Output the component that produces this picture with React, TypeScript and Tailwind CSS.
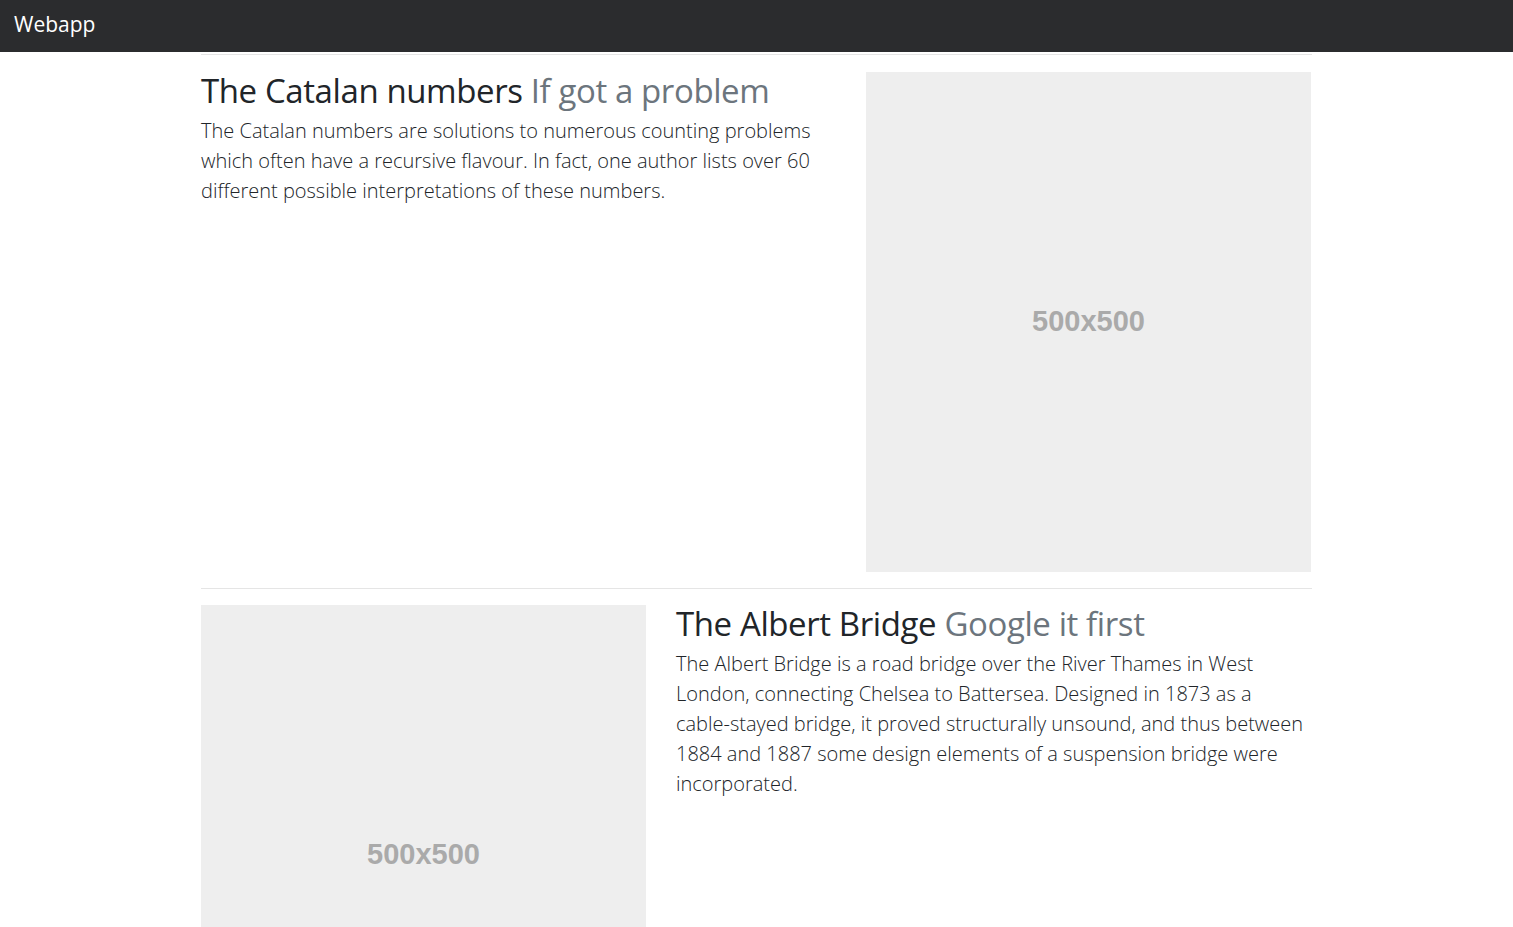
import React from "react";

const font = { fontFamily: '"Segoe UI", "Open Sans", "Noto Sans", sans-serif' };

function Placeholder() {
  return (
    <div className="flex h-[500px] w-full items-center justify-center bg-[#eeeeee]">
      <span
        className="text-[29px] font-bold text-[#aaaaaa]"
        style={{ fontFamily: '"Liberation Sans", Arial, sans-serif' }}
      >
        500x500
      </span>
    </div>
  );
}

export default function App() {
  return (
    <div className="h-screen overflow-hidden bg-white text-[#212529]" style={font}>
      <nav className="flex h-[52px] items-center bg-[#2b2c2e] px-[14px] pb-[2px]">
        <span className="text-[21px] text-white">Webapp</span>
      </nav>
      <main className="mx-auto max-w-[1141px] px-[15px]">
        <hr className="mt-[2px] mb-[17px] border-t border-[#e5e5e5]" />
        <div className="flex gap-[30px]">
          <div className="w-[635px] shrink-0">
            <h2 className="text-[33px] leading-[1.15] tracking-[-0.4px]">
              The Catalan numbers <span className="text-[#6c757d]">If got a problem</span>
            </h2>
            <p className="mt-[6px] text-[20px] font-light leading-[30px]">
              The Catalan numbers are solutions to numerous counting problems which often have a recursive flavour. In fact, one author lists over 60 different possible interpretations of these numbers.
            </p>
          </div>
          <div className="w-[445px] shrink-0">
            <Placeholder />
          </div>
        </div>
        <hr className="my-[16px] border-t border-[#e5e5e5]" />
        <div className="flex gap-[30px]">
          <div className="w-[445px] shrink-0">
            <Placeholder />
          </div>
          <div className="w-[635px] shrink-0">
            <h2 className="text-[33px] leading-[1.15] tracking-[-0.4px]">
              The Albert Bridge <span className="text-[#6c757d]">Google it first</span>
            </h2>
            <p className="mt-[6px] text-[20px] font-light leading-[30px]">
              The Albert Bridge is a road bridge over the River Thames in West London, connecting Chelsea to Battersea. Designed in 1873 as a{" "}
              <span className="whitespace-nowrap">cable-stayed</span> bridge, it proved structurally unsound, and thus between 1884 and 1887 some design elements of a suspension bridge were incorporated.
            </p>
          </div>
        </div>
      </main>
    </div>
  );
}
